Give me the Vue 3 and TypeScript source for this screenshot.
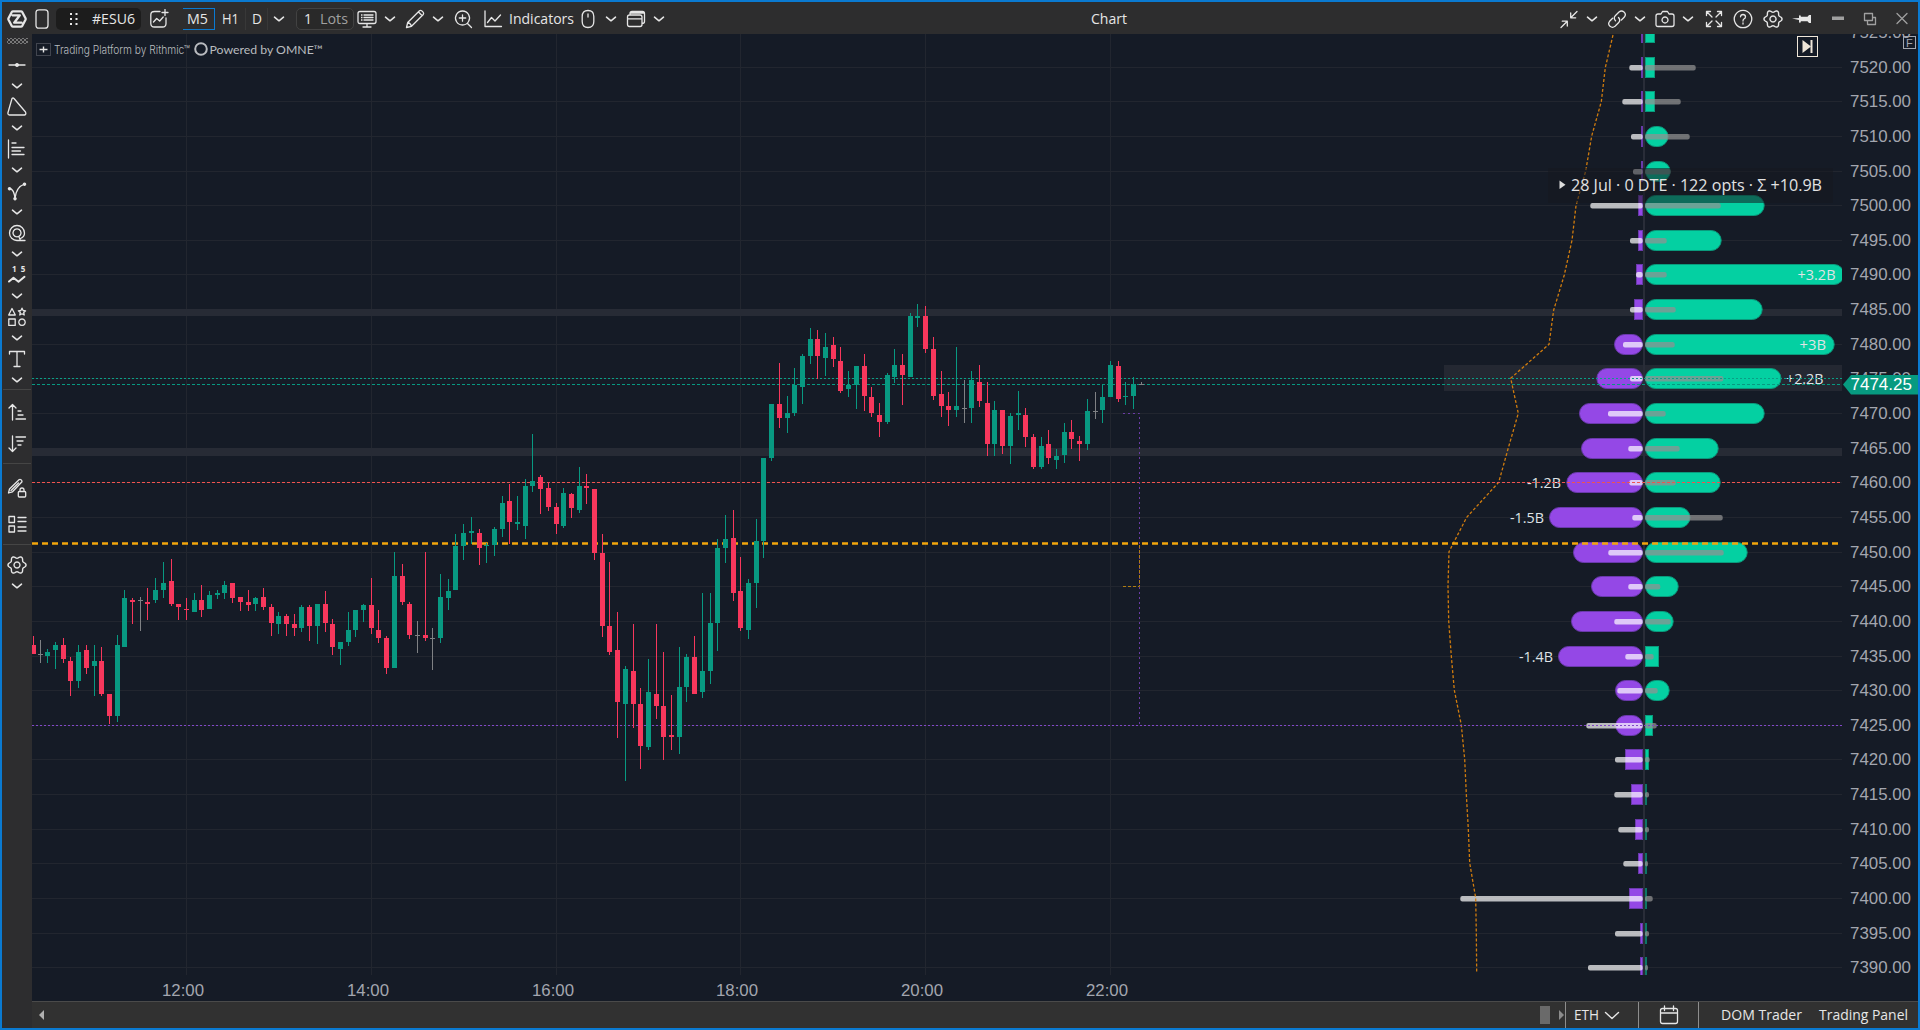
<script setup lang="ts">
import { h } from 'vue'

/* Six-lobed outline of the settings gear */
const gearPath =
  'M' +
  Array.from({ length: 72 }, (_, k) => {
    const a = (k * Math.PI) / 36
    const r = 7.9 + 1.15 * Math.cos(6 * a)
    return `${(10 + r * Math.cos(a)).toFixed(2)} ${(10 + r * Math.sin(a)).toFixed(2)}`
  }).join('L') +
  'ZM10 7a3 3 0 1 0 .01 0z'

/* ---------- icons: 20x20 boxes, s = stroked path, f = filled path ---------- */
const icons: Record<string, { s?: string; f?: string; k?: string; w?: number }> = {
  logo: { s: 'M6 2.300h8q.8 0 1.200.7L18.500 9.300q.3.7 0 1.400L15.200 17q-.4.7-1.200.7H6q-.8 0-1.200-.7L1.500 10.700q-.3-.7 0-1.400L4.800 3q.4-.7 1.200-.7zM5.500 6.300H12.800L7.200 13.700H14.500', w: 2.3 },
  panel: { s: 'M7 .8h6q3 0 3 3v12.400q0 3-3 3H7q-3 0-3-3V3.800q0-3 3-3z' },
  drag: { f: 'M6 4h2v2H6zM11.500 4h2v2h-2zM6 9h2v2H6zM11.500 9h2v2h-2zM6 14h2v2H6zM11.500 14h2v2h-2z' },
  addchart: { s: 'M11 2.500H5.500Q1.800 2.500 1.800 6v8.500Q1.800 18 5.500 18h8q3.500 0 3.500-3.500V9M4.500 13l3.200-3.500 3 2.500 3.500-4M16 .5v6M13 3.500h6' },
  down: { s: 'M5.500 8.200 10 11.800l4.500-3.600', w: 1.6 },
  monitor: { s: 'M3 2.500h14q2 0 2 2v8q0 2-2 2H3q-2 0-2-2v-8q0-2 2-2zM7 6h9M7 8.500h9M7 11h9M10 14.500V18M6 18h8', f: 'M4 5.300h1.500v1.500H4zM4 7.800h1.500v1.500H4zM4 10.300h1.500v1.500H4z' },
  pencil: { s: 'M1.500 18.500l1.200-5L14.500 1.700q1.200-.8 2.400.2l1.200 1.200q1 1.200.2 2.400L6.500 17.300zM2.700 13.500q2.800.6 3.800 3.800M13.500 3l3.500 3.500' },
  zoomin: { s: 'M9.500 2a7 7 0 1 0 .01 0zM14.500 14.500 18.500 18.500M9.500 5.800v6.400M6.300 9h6.400' },
  chart: { s: 'M2 2v15.500h16.500M4.500 13.500l4-5 3.500 3.500 5.500-6' },
  mouse: { s: 'M10 1.500q5.800 0 5.800 6v5q0 6-5.800 6t-5.800-6v-5q0-6 5.800-6zM10 5v3' },
  windows: { s: 'M3.500 6h10.500q2 0 2 2v7.500q0 2-2 2H3.500q-2 0-2-2V8q0-2 2-2zM1.500 9.800h14.500M4 6V4.500q0-2 2-2h10.500q2 0 2 2v8q0 2-2.500 2M4 4h14' },
  collapse: { s: 'M18 2.500l-6 6M11.700 4v4.800h5M2 18.500l6-6M3.300 12.200h5V17' },
  link: { s: 'M8.500 11.800q-2.500-2.800 0-5.300l3.500-3.500q2.500-2 5 0t.4 5l-3 3M11.500 8.500q2.500 2.800 0 5.300L8 17.300q-2.500 2-5 0t-.4-5l3-3' },
  camera: { s: 'M3 5h3l1.500-2.500h5L14 5h3q2 0 2 2v8.500q0 2-2 2H3q-2 0-2-2V7q0-2 2-2zM10 8a3 3 0 1 0 .01 0z' },
  expand: { s: 'M2.500 6.500v-4h4M2.500 2.500 8 8M17.500 6.500v-4h-4M17.500 2.500 12 8M2.500 13.500v4h4M2.500 17.500 8 12M17.500 13.500v4h-4M17.500 17.500 12 12' },
  help: { s: 'M10 1.300a8.700 8.700 0 1 0 .01 0zM7.500 7.800Q7.700 5.500 10 5.500t2.500 2.200Q12.500 9.200 10.900 10 10 10.600 10 12M10 13.800v1.200' },
  gear: { s: gearPath, w: 1.4 },
  pin: { f: 'M0 9.400 7 9V7l1-1.200 1 2h6.500L17 6h2v8h-2l-1.500-1.800H9l-1 2L7 13v-2z' },
  min: { f: 'M4 7.500h12v3.500H4z' },
  restore: { s: 'M4.500 4.500h8v7h-8zM7.500 11.500v4h8v-7h-3' },
  close: { s: 'M5 4.500 15 14.500M15 4.500 5 14.500' },
  hline: { s: 'M2 10h16', f: 'M10 8a2 2 0 1 0 .01 0z' },
  triangle: { s: 'M5 1.500q1-1 2 0L18.500 15q1 2.500-1 3H2.500q-2-.2-1.500-2.500z' },
  profile: { s: 'M1.500 1v18M5 4h4M5 8.500h12M5 12h8.500M5 15.500h12' },
  curve: { s: 'M2.500 7.500Q7 8 8 17.500 9 6 17.500 3', f: 'M2.500 6a1.700 1.700 0 1 0 .01 0zM17.500 1.500a1.700 1.700 0 1 0 .01 0zM8 16a1.700 1.700 0 1 0 .01 0z' },
  spiral: { s: 'M18 17.500H10a7.500 7.500 0 1 1 7.500-7.500q0 4-4 5.500M10 5.800a4 4 0 1 0 .01 0zM12 14l1.500 3.500' },
  shapes: { s: 'M5 1.500 8.300 8H1.700zM1.800 12h6.400v6.400H1.800zM15 12a3.200 3.200 0 1 0 .01 0zM15 1.200l1.100 2.300 2.500.3-1.900 1.700.5 2.500L15 6.800 12.800 8l.5-2.500-1.900-1.700 2.500-.3z' },
  text: { s: 'M2.500 5V2.500h15V5M10 2.500V17.500M7 17.500h6' },
  sortup: { s: 'M5.500 18V2.500M2 6l3.500-3.500L9 6M11 9h3M11 13h5M9 17h9.500' },
  sortdown: { s: 'M5.500 2v15.500M2 14l3.500 3.500L9 14M9 3h9.500M10 7h6M11 11h3' },
  editlock: { s: 'M1.500 15l1-4L12 1.700q1-.7 2 0t1 2L5.500 13.800zM4 12.500 11.500 5M12.300 13.500h5.400q1 0 1 1v3.500q0 1-1 1h-5.400q-1 0-1-1v-3.500q0-1 1-1zM13 13.500V12q0-2 2-2t2 2v1.500' },
  list: { s: 'M2 2.500h5.500v6H2zM2 12h5.500v6H2zM11 3.500h8M11 7.500h8M11 13h8M11 17h8' },
  zigzag: { s: 'M2 16.500l4.500-3.700 5 4 6-5', w: 2 },
  calendar: { s: 'M3.500 3.500h13q2 0 2 2v11q0 2-2 2h-13q-2 0-2-2v-11q0-2 2-2zM1.500 8h17M5.500 1v4.500M14.500 1v4.500' },
  wide: { s: 'M3.500 7.500 10 13.500l6.500-6', w: 1.4 },
}

const Ico = (p: { n: string }) => {
  const i = icons[p.n]
  return h('svg', { width: 20, height: 20, viewBox: '0 0 20 20', fill: 'none' }, [
    i.f && h('path', { d: i.f, fill: 'currentColor' }),
    i.s && h('path', { d: i.s, stroke: 'currentColor', 'stroke-width': i.w ?? 1.3, 'stroke-linecap': 'round', 'stroke-linejoin': 'round' }),
  ])
}
Ico.props = ['n']

/* Text set to an exact width */
const Fit = (p: { t: string; w: number }) =>
  h('svg', { width: p.w, height: 22, viewBox: `0 0 ${p.w} 22`, overflow: 'visible' }, [
    h('text', { x: 0, y: 16, 'font-size': 15, fill: 'currentColor', textLength: p.w, lengthAdjust: 'spacingAndGlyphs' }, p.t),
  ])
Fit.props = ['t', 'w']

const tools = ['hline', 'triangle', 'profile', 'curve', 'spiral', 'zigzag', 'shapes', 'text']

/* ---------- price scale: pixel row of each 5-point level, from 7525 down ---------- */
const rows = [32, 67, 101, 136, 171, 205, 240, 274, 309, 344, 378, 413, 448, 482, 517, 552, 586, 621, 656, 690, 725, 759, 794, 829, 863, 898, 933, 967]
const prices = rows.map((y, k) => ({ y, t: (7525 - k * 5).toFixed(2) }))
const times = [
  [186, '12:00'], [371, '14:00'], [556, '16:00'], [740, '18:00'], [925, '20:00'], [1110, '22:00'],
] as [number, string][]

/* ---------- strike profile: put edge, call edge, put OI edge, call OI edge, label ---------- */
const strikes: [number, number, number, number, string?][] = [
  [1641, 1655, 0, 0],
  [1641, 1655, 1629.3, 1695.7],
  [1641, 1655, 1622.3, 1680.7],
  [1641, 1668.5, 1631, 1689.7],
  [1641, 1670.7, 1633, 1670.7],
  [1638, 1764.7, 1590.3, 1720.7],
  [1638, 1721.7, 1630, 1666.7],
  [1636, 1844.5, 1636, 1666.7, '+3.2B'],
  [1634, 1762.7, 1630, 1675.7],
  [1614, 1834.7, 1623, 1674.7, '+3B'],
  [1596.3, 1781.5, 1630, 1723.3, '+2.2B'],
  [1579, 1764.7, 1608, 1665.7],
  [1581, 1718.7, 1628.3, 1679.7],
  [1566.3, 1720.7, 1629.3, 1675.7, '-1.2B'],
  [1549, 1690.5, 1632.3, 1722.7, '-1.5B'],
  [1573, 1747.7, 1608.3, 1723.7],
  [1591, 1678.7, 1628.3, 1660.3],
  [1571, 1673.7, 1614.3, 1670.7],
  [1558, 1659, 1625.3, 1653.7, '-1.4B'],
  [1615, 1669.7, 1617.3, 1657.7],
  [1615.3, 1653, 1586.3, 1656.7],
  [1625, 1649, 1615, 1649.7],
  [1631, 1647, 1614.3, 1649],
  [1635, 1647, 1618.3, 1649],
  [1638, 1647, 1623.3, 1648],
  [1629, 1647, 1460.3, 1652.7],
  [1640, 1647, 1615, 1649],
  [1640, 1647, 1588, 1648],
]
const labelX: Record<string, [number, number]> = {
  '+3.2B': [1797.5, 38], '+3B': [1799.5, 26.5], '+2.2B': [1786, 37.5],
  '-1.2B': [1527, 34], '-1.5B': [1510, 34], '-1.4B': [1519, 34],
}
const profile = strikes.map(([p, c, po, co, label], k) => {
  const pw = 1643 - p
  const cw = c - 1645
  return {
    y: rows[k], p, pw, cw, po, co, label,
    pr: pw > 20 ? 10 : 0,
    cr: cw > 20 ? 10 : 0,
    pf: pw > 2 ? '#9448e6' : '#5b3394',
    cf: cw > 2 ? '#04d0a2' : '#0d7665',
  }
})

const flow = '1613,35 1605.3,67.7 1601.3,101.7 1591.7,136 1585.7,171 1576,205.7 1572,240.3 1564.3,275 1553.7,310 1549,344.3 1510.7,378.3 1518.3,413.3 1508.3,448 1498.7,482.3 1466.7,517.3 1449,551.7 1448,586 1448.7,621 1451.3,656 1454.3,690 1461.3,725 1464.7,759.3 1466.3,794 1468.3,829 1469.7,863 1475.7,898 1476.3,933 1476.7,973'

/* ---------- candles: x high top bottom low side, in thirds of a pixel from each block's origin ---------- */
const blocks: [number, number, string][] = [
  [30, 540, '10 289 315 342 342 d,31 300 343 343 368 n,52 328 336 348 368 u,76 306 315 330 386 u,100 294 315 357 368 d,121 351 363 423 467 d,145 315 336 423 443 u,169 315 330 384 401 d,193 315 363 378 467 u,214 321 363 462 467 d,238 462 462 528 551 d,262 285 315 528 545 u,283 150 174 321 321 u,307 174 180 186 251 d,331 171 181 181 272 n,352 144 186 192 240 d,376 114 150 180 188 u,400 66 129 150 173 u,424 57 123 192 197 d,445 192 192 201 240 d,469 174 207 210 240 d,493 159 180 216 216 u,514 135 180 210 230 d,538 153 165 207 207 u,562 150 159 165 176 u,583 123 135 159 176 u,607 129 129 174 188 d,631 171 171 186 212 d,655 150 186 195 212 d,676 171 174 192 212 u,700 144 171 201 209 d,724 192 201 249 287 d,745 216 228 252 281 u,769 222 228 252 287 d,793 222 252 264 287 d,814 195 201 264 275 u,838 195 201 258 302 d,862 192 192 258 311 u,886 153 192 249 275 d,907 237 252 321 344 d,931 306 306 327 374 u,955 216 270 306 317 u,976 210 210 270 290 u,1000 192 195 210 245 u,1024 114 195 264 281 d,1045 210 270 294 308 d,1069 288 294 384 401 d,1093 36 108 384 384 u,1117 72 108 186 194 d'],
  [400, 420, '28 546 552 645 656 d,52 603 646 646 698 n,76 396 645 654 662 d,97 624 655 655 749 n,121 462 531 654 668 u,145 477 513 534 569 u,166 342 378 510 510 u,190 312 339 378 419 u,214 291 333 339 371 u,238 327 339 384 434 d,259 369 375 378 428 u,283 321 327 375 407 u,307 228 249 327 350 u,328 192 243 306 371 d,352 228 306 312 329 u,376 177 198 318 356 u,397 42 183 198 215 u,421 165 171 207 281 d,445 186 204 261 272 d,469 249 261 312 341 d,490 204 219 318 323 u,514 219 222 264 293 d,538 141 198 270 278 u,559 162 198 204 251 d,583 207 207 399 419 d,607 342 399 618 650 d,628 426 618 696 704 d,652 576 690 846 953 d,676 738 747 852 1082 u,700 612 753 852 923 d,721 804 852 978 1046 d,745 717 816 981 989 u,769 612 822 858 896 d,790 696 858 951 1019 d,814 825 945 951 989 d,838 681 801 951 1001 u,859 702 711 801 845 u,883 648 711 822 822 d,907 519 753 816 833 u,931 519 609 753 791 u,952 357 384 609 692 u,976 285 357 384 428 u,1000 270 354 519 542 d,1021 411 513 624 632 d,1045 477 489 630 656 u,1069 297 363 489 563 u,1090 114 114 363 413 u'],
  [740, 290, '94 342 342 504 512 u,118 219 342 384 413 d,142 318 369 384 428 u,163 234 285 369 377 u,187 192 198 291 341 u,211 114 147 198 221 u,232 120 147 198 266 d,256 129 171 204 257 u,280 141 165 207 230 d,301 171 213 303 308 d,325 243 285 297 320 u,349 228 228 285 356 u,373 192 228 318 362 d,394 291 321 369 380 d,418 339 375 396 440 d,442 249 255 396 401 u,463 177 225 261 278 u,487 192 225 255 344 d,511 69 78 261 261 u,532 42 78 84 110 u,556 48 78 177 188 d,580 141 177 318 329 d,604 243 312 348 380 d,625 306 348 360 407 d,649 171 348 360 380 u,673 270 355 355 398 n,694 243 270 354 398 u,718 225 276 333 350 d,742 276 339 462 497 d,763 333 360 462 497 u,787 360 360 468 491 d,811 369 378 468 521 u,835 303 369 375 419 u,856 354 375 441 470 d,880 432 441 531 536 d,904 441 468 531 536 u,925 420 462 504 521 d,949 477 498 510 536 u,973 399 426 495 518 u,994 390 426 447 476 d,1018 438 453 462 512 d,1042 327 363 462 479 u,1066 306 364 364 386 n,1087 285 321 360 398 u,1111 213 225 321 321 u,1135 213 228 327 335 d,1156 276 318 321 344 u,1180 261 282 318 356 u,1204 276 283 283 285 n'],
]
const candleColor: Record<string, string> = { u: '#089981', d: '#f7375c', n: '#7f8184' }
const candles = blocks.flatMap(([ox, oy, list]) =>
  list.split(',').map((r) => {
    const v = r.split(' ')
    const [hi, top, bot, lo] = v.slice(1, 5).map((n) => Number(n) / 3)
    const ty = oy + Math.floor(top)
    return {
      x: ox + Math.floor(Number(v[0]) / 3),
      hi: oy + Math.round(hi),
      lo: oy + Math.round(lo),
      top: ty,
      height: Math.max(1, oy + Math.round(bot) - ty),
      c: candleColor[v[5]],
    }
  }),
)
</script>

<template>
  <div class="window">
    <header class="topbar">
      <div class="left">
        <Ico n="logo" />
        <Ico n="panel" />
        <div class="symbol"><Ico n="drag" /><Fit t="#ESU6" :w="43" /></div>
        <Ico n="addchart" />
        <div class="tf active"><Fit t="M5" :w="21" /></div>
        <Fit t="H1" :w="17" />
        <div class="tf sep"><Fit t="D" :w="10" /></div>
        <div class="tf sep"><Ico n="down" /></div>
        <div class="lots"><Fit t="1" :w="8" /><Fit class="dim" t="Lots" :w="28" /></div>
        <Ico n="monitor" />
        <Ico n="down" />
        <Ico n="pencil" />
        <Ico n="down" />
        <Ico n="zoomin" />
        <Ico n="chart" />
        <Fit t="Indicators" :w="65" />
        <Ico n="mouse" />
        <Ico n="down" />
        <Ico n="windows" />
        <Ico n="down" />
      </div>
      <div class="title"><Fit t="Chart" :w="36" /></div>
      <div class="right">
        <Ico n="collapse" />
        <Ico n="down" />
        <Ico n="link" />
        <Ico n="down" />
        <Ico n="camera" />
        <Ico n="down" />
        <Ico n="expand" />
        <Ico n="help" />
        <Ico n="gear" />
        <Ico n="pin" />
        <Ico class="dim" n="min" />
        <Ico class="dim" n="restore" />
        <Ico class="dim last" n="close" />
      </div>
    </header>

    <div class="body">
      <aside class="side">
        <div class="grip"></div>
        <template v-for="t in tools" :key="t">
          <div class="cell">
            <span v-if="t === 'zigzag'" class="digits">1 5</span>
            <Ico :n="t" />
          </div>
          <div class="chev"><Ico n="down" /></div>
        </template>
        <div class="group sorts">
          <div class="slot"><Ico n="sortup" /></div>
          <div class="slot"><Ico n="sortdown" /></div>
        </div>
        <div class="group edits">
          <div class="slot"><Ico n="editlock" /></div>
          <div class="slot"><Ico n="list" /></div>
        </div>
        <div class="group prefs">
          <div class="cell"><Ico n="gear" /></div>
          <div class="chev"><Ico n="down" /></div>
        </div>
      </aside>

      <main class="main">
        <svg class="chart" width="1886" height="967" viewBox="32 34 1886 967">
          <defs>
            <clipPath id="plot"><rect x="32" y="34" width="1810" height="941" /></clipPath>
          </defs>
          <g clip-path="url(#plot)">
            <rect v-for="p in prices" :key="p.t" x="32" :y="p.y" width="1810" height="1" fill="#22262f" />
            <rect v-for="t in times" :key="t[0]" :x="t[0]" y="34" width="1" height="941" fill="#22262f" />
            <rect x="32" y="309" width="1810" height="7" fill="#272b35" />
            <rect x="32" y="448" width="1810" height="8" fill="#272b35" />
            <rect x="1444" y="365" width="398" height="26" fill="#242832" />
            <rect x="1643" y="34" width="2" height="941" fill="#292d38" />

            <g v-for="s in profile" :key="s.y">
              <rect :x="s.p + .5" :y="s.y - 9.5" :width="Math.max(1, s.pw - 1)" height="20" :rx="s.pr" :fill="s.pf" stroke="#6a3aac" />
              <rect v-if="s.cw > 2" x="1645.5" :y="s.y - 9.5" :width="s.cw - 1" height="20" :rx="s.cr" :fill="s.cf" stroke="#0a9a7c" />
              <rect v-else x="1645" :y="s.y - 10" width="2" height="21" :fill="s.cf" />
              <template v-if="s.po">
                <rect :x="s.po" :y="s.y - 2" :width="1642.7 - s.po" height="5.5" rx="2" fill="#fff" fill-opacity=".7" />
                <rect x="1645" :y="s.y - 2" :width="s.co - 1645" height="5.5" rx="2" fill="#929292" fill-opacity=".73" />
              </template>
              <text v-if="s.label" class="ui" :x="labelX[s.label][0]" :y="s.y + 6" font-size="15" :textLength="labelX[s.label][1]" lengthAdjust="spacingAndGlyphs" fill="#dfe3e6">{{ s.label }}</text>
            </g>
            <polyline :points="flow" fill="none" stroke="#d07c0e" stroke-width="1.3" stroke-dasharray="3 2" />

            <path d="M32 378.500H1842" stroke="#0a9f86" stroke-dasharray="2 2" />
            <path d="M32 384.500H1842" stroke="#089981" stroke-dasharray="3 2" />
            <path d="M32 482.500H1842" stroke="#ef5350" stroke-dasharray="3 2" />
            <path d="M32 543.500H1839" stroke="#f2a60c" stroke-width="2.600" stroke-dasharray="6 4" />
            <path d="M32 725.500H1842" stroke="#8148c8" stroke-dasharray="2 2" />
            <path d="M1123 413.500H1139.500V725" fill="none" stroke="#6a3ca5" stroke-dasharray="2 3" />
            <path d="M1123 586.500H1139.500V544" fill="none" stroke="#b07d12" stroke-dasharray="3 2" />

            <g v-for="(c, k) in candles" :key="k" :fill="c.c">
              <rect :x="c.x" :y="c.hi" width="1" :height="c.lo - c.hi" />
              <rect :x="c.x - 2" :y="c.top" width="5" :height="c.height" />
            </g>
          </g>

          <rect x="1548" y="168" width="285" height="35" fill="#16181f" fill-opacity=".55" />
          <path d="M1559.500 180.500v8.500l6-4.200z" fill="#dcdcdc" />
          <text class="ui" x="1571" y="190.500" font-size="16" textLength="251" lengthAdjust="spacingAndGlyphs" fill="#e2e2e2">28 Jul · 0 DTE · 122 opts · Σ +10.9B</text>

          <g class="num" font-size="17" fill="#a3a6af">
            <text v-for="p in prices" :key="p.t" x="1850" :y="p.y + 6" textLength="61" lengthAdjust="spacingAndGlyphs">{{ p.t }}</text>
            <text v-for="t in times" :key="t[1]" :x="t[0] - 3" y="996" text-anchor="middle" textLength="42" lengthAdjust="spacingAndGlyphs">{{ t[1] }}</text>
          </g>
          <path d="M1843 384.500 1851 375H1918V394.500H1851z" fill="#079a80" />
          <text class="num" x="1850.500" y="390" font-size="17" fill="#fff">7474.25</text>

          <rect x="36.500" y="43.500" width="14" height="12" fill="none" stroke="#41454f" />
          <path d="M39.500 49.500h8M43.500 46.500v6" stroke="#e4e4e4" stroke-width="1.400" />
          <text class="thin" x="54" y="53.500" font-size="12" textLength="136" lengthAdjust="spacingAndGlyphs" fill="#b9bbbf">Trading Platform by Rithmic™</text>
          <circle cx="201" cy="49" r="5.800" fill="none" stroke="#b9bbbf" stroke-width="2" />
          <text class="lato" x="209.500" y="53.500" font-size="12" textLength="113.500" lengthAdjust="spacingAndGlyphs" fill="#b9bbbf">Powered by OMNE™</text>

          <rect x="1797.500" y="36.500" width="20" height="20" fill="#151b26" stroke="#efe6d8" />
          <path d="M1802.500 40v13l8.500-6.500zM1810.500 40h2v13h-2z" fill="#efe6d8" />
          <rect x="1903.500" y="36.500" width="12" height="12" fill="none" stroke="#a3a6af" />
          <text class="num" x="1906" y="46.500" font-size="11" fill="#a3a6af">F</text>
        </svg>

        <footer class="foot">
          <div class="scroll">
            <i class="arrow back"></i>
            <span class="fill"></span>
            <span class="thumb"></span>
            <i class="arrow fwd"></i>
          </div>
          <div class="session"><Fit t="ETH" :w="25" /><Ico n="wide" /></div>
          <div class="cal"><Ico n="calendar" /></div>
          <div class="links"><Fit t="DOM Trader" :w="81" /><Fit t="Trading Panel" :w="89" /></div>
        </footer>
      </main>
    </div>
  </div>
</template>

<style>
body {
  background: #151b26;
  overflow: hidden;
}
</style>

<style scoped>
.window {
  box-sizing: border-box;
  width: 1920px;
  height: 1030px;
  border: 2px solid #0a7ad1;
  background: #151b26;
  color: #e6e6e6;
  font-family: "Open Sans", "Noto Sans", sans-serif;
  display: flex;
  flex-direction: column;
  overflow: hidden;
}
svg {
  display: block;
  flex: none;
}
.topbar {
  box-sizing: border-box;
  flex: 0 0 32px;
  padding-top: 2px;
  background: #2d2d2e;
  display: flex;
}
.left,
.right {
  display: grid;
  align-items: center;
  justify-items: center;
}
.left {
  grid-template-columns: 30px 20px 89px 36px 38px 30px 22px 22px 65px 26px 20px 30px 16px 34px 25px 73px 20px 26px 24px 22px;
}
.right {
  padding-left: 8px;
  width: 362px;
  grid-template-columns: 26px 20px 30px 16px 34px 12px 39px 20px 40px 18px 54px 10px 43px;
}
.title {
  flex: 1;
  display: flex;
  align-items: center;
  justify-content: center;
}
.dim {
  color: #a0a0a0;
}
.right > .last {
  justify-self: end;
  margin-right: 6px;
}
.symbol {
  justify-self: end;
  width: 85px;
  height: 22px;
  box-sizing: border-box;
  padding-left: 8px;
  gap: 8px;
  border-radius: 5px;
  background: #1c1c1c;
  display: flex;
  align-items: center;
}
.tf {
  width: 100%;
  height: 22px;
  display: flex;
  align-items: center;
  justify-content: center;
}
.tf.active {
  box-sizing: border-box;
  justify-self: end;
  width: 32px;
  padding-right: 3px;
  border: 1px solid #0a7ad1;
  border-left: 0;
}
.tf.sep {
  box-sizing: border-box;
  border-left: 1px solid #383838;
}
.lots {
  justify-self: end;
  box-sizing: border-box;
  width: 58px;
  height: 22px;
  padding-left: 7px;
  gap: 8px;
  border: 1px solid #424242;
  border-radius: 5px;
  background: #292929;
  display: flex;
  align-items: center;
}
.body {
  flex: 1;
  min-height: 0;
  display: flex;
}
.side {
  flex: 0 0 30px;
  background: #2d2d2f;
  display: flex;
  flex-direction: column;
}
.grip {
  height: 6px;
  margin: 4px 4px 10px 5px;
  background-image: radial-gradient(circle, #c8c8c8 .5px, transparent .9px), radial-gradient(circle, #c8c8c8 .5px, transparent .9px);
  background-size: 4px 4px;
  background-position: 0 0, 2px 2px;
}
.cell,
.chev,
.slot {
  display: flex;
  align-items: center;
  justify-content: center;
}
.cell {
  height: 22px;
  position: relative;
}
.chev {
  height: 20px;
}
.digits {
  position: absolute;
  top: 1px;
  left: 10px;
  font: bold 8px/8px "Open Sans", sans-serif;
  word-spacing: 2px;
}
.group {
  border-top: 1px solid #454545;
  margin: 0 1px;
}
.sorts {
  margin-top: -1px;
  padding-top: 6px;
  height: 67px;
}
.sorts .slot {
  height: 32px;
}
.edits {
  padding-top: 6px;
  height: 74px;
}
.edits .slot {
  height: 36px;
}
.prefs {
  padding-top: 9px;
}
.main {
  flex: 1;
  display: flex;
  flex-direction: column;
}
.num {
  font-family: "Liberation Sans", Arial, sans-serif;
}
.ui {
  font-family: "Open Sans", "Noto Sans", sans-serif;
}
.thin {
  font-family: "Inter", sans-serif;
  font-weight: 300;
}
.lato {
  font-family: "Lato", sans-serif;
}
.foot {
  flex: 1;
  box-sizing: border-box;
  border-top: 1px solid #4a4a4a;
  background: #313131;
  display: flex;
}
.scroll {
  flex: 0 0 1533px;
  display: flex;
  align-items: center;
}
.fill {
  flex: 1;
}
.arrow {
  border: 5px solid transparent;
}
.back {
  margin-left: 2px;
  border-right-color: #b0b0b0;
}
.fwd {
  border-left-color: #8c8c8c;
  border-right-width: 0;
  margin-right: 1px;
}
.thumb {
  width: 10px;
  height: 18px;
  margin-right: 9px;
  background: #6a6a6a;
}
.session {
  box-sizing: border-box;
  flex: 0 0 73px;
  padding-left: 8px;
  gap: 3px;
  border-left: 1px solid #8e8e8e;
  display: flex;
  align-items: center;
}
.cal {
  box-sizing: border-box;
  flex: 0 0 60px;
  border-left: 1px solid #8e8e8e;
  display: flex;
  align-items: center;
  justify-content: center;
}
.links {
  flex: 1;
  padding-left: 22px;
  gap: 17px;
  border-left: 1px solid #8e8e8e;
  display: flex;
  align-items: center;
}
</style>
